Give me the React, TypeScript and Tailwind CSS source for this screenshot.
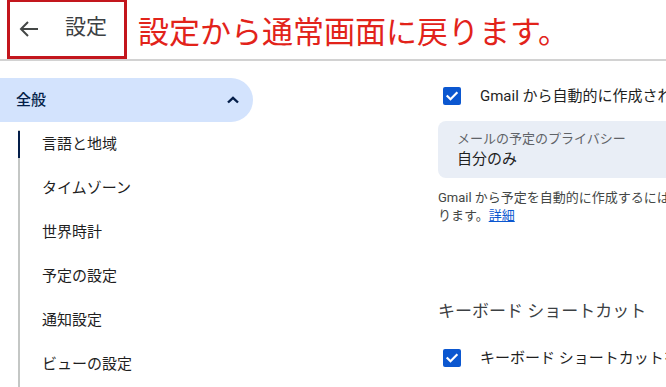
import React from "react";

const Check = () => (
  <div className="w-[18px] h-[18px] rounded-[2px] bg-[#0b57d0] flex items-center justify-center shrink-0">
    <svg width="14" height="14" viewBox="0 0 14 14" fill="none">
      <path d="M2.5 7.2l3 3L11.6 4" stroke="white" strokeWidth="2.2" strokeLinecap="square" />
    </svg>
  </div>
);

const items = ["言語と地域", "タイムゾーン", "世界時計", "予定の設定", "通知設定", "ビューの設定"];

export default function App() {
  return (
    <div className="w-[666px] h-[387px] overflow-hidden bg-white flex flex-col font-['Roboto','Noto_Sans_CJK_JP',sans-serif]">
      {/* header */}
      <div className="flex items-start h-[61px] border-b-2 border-[#d2d2d2] shrink-0">
        <div className="-mt-px ml-[7px] h-[60px] w-[120px] border-[3px] border-[#c3161d] flex items-center pl-[9px]">
          <svg width="20" height="18" viewBox="0 0 20 18" fill="none" className="shrink-0">
            <path d="M19 9H2M9 2L2 9l7 7" stroke="#444746" strokeWidth="2" />
          </svg>
          <span className="ml-[26px] text-[21px] leading-none text-[#3c4043] -mt-[3px]">設定</span>
        </div>
        <div className="ml-[11px] self-center -mt-[1px] text-[31px] leading-none text-[#e2231a] whitespace-nowrap font-['Noto_Sans_CJK_JP',sans-serif]">
          設定から通常画面に戻ります。
        </div>
      </div>

      {/* body */}
      <div className="flex flex-1 min-h-0">
        <div className="w-[256px] shrink-0 flex flex-col pt-[17px]">
          <div className="h-[44px] w-[253px] rounded-r-full bg-[#d3e3fd] flex items-center justify-between pl-4 pr-[14px]">
            <span className="text-[15px] text-[#041e49] font-medium">全般</span>
            <svg width="12" height="8" viewBox="0 0 12 8" fill="none">
              <path d="M1 6.5L6 1.8l5 4.7" stroke="#041e49" strokeWidth="2.4" />
            </svg>
          </div>
          <div className="relative flex-1">
            <span className="absolute left-[18px] top-[8px] bottom-0 w-[2px] bg-[#c4c7c5]" />
            <span className="absolute left-[18px] top-[9px] h-[27px] w-[2px] bg-[#041e49]" />
            {items.map((t) => (
              <div key={t} className="h-[44px] flex items-center pl-[42px] text-[15px] text-[#1f1f1f]">
                {t}
              </div>
            ))}
          </div>
        </div>

        <div className="flex-1 min-w-0 overflow-hidden ml-[182px] whitespace-nowrap">
          <div className="mt-[25px] h-[20px] flex items-center">
            <div className="ml-[5px]"><Check /></div>
            <span className="ml-[19px] text-[15px] text-[#1f1f1f]">Gmail から自動的に作成された予定をカレンダーに表示する</span>
          </div>
          <div className="mt-[15px] h-[57px] w-[400px] rounded-[8px] bg-[#e9eef6] pl-[19px] pt-[9px]">
            <div className="text-[13px] leading-[17px] text-[#5f6368]">メールの予定のプライバシー</div>
            <div className="mt-[2px] text-[15px] leading-[20px] text-[#1f1f1f]">自分のみ</div>
          </div>
          <div className="mt-[11px] text-[13px] leading-[18px] text-[#444746]">
            <div>Gmail から予定を自動的に作成するには、スマート機能を有効にする必要があ</div>
            <div>
              ります。<span className="text-[#0b57d0] underline">詳細</span>
            </div>
          </div>
          <div className="mt-[74px] text-[17px] leading-[24px] text-[#3c4043]">キーボード ショートカット</div>
          <div className="mt-[25px] h-[20px] flex items-center">
            <div className="ml-[5px]"><Check /></div>
            <span className="ml-[19px] text-[15px] text-[#1f1f1f]">キーボード ショートカットを有効にする</span>
          </div>
        </div>
      </div>
    </div>
  );
}
